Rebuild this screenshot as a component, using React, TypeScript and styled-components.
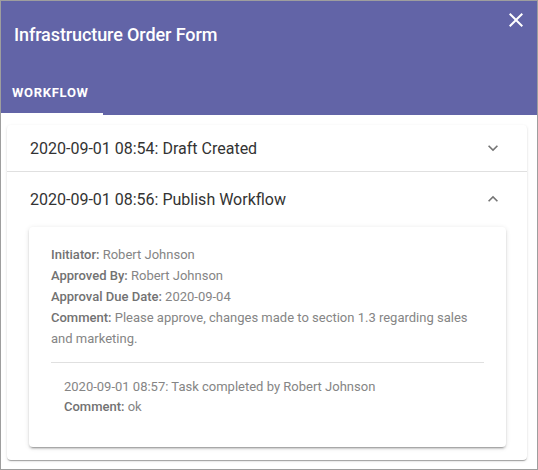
import styled, { createGlobalStyle } from "styled-components";

const GlobalStyle = createGlobalStyle`
  html, body {
    margin: 0;
    padding: 0;
    background: #ffffff;
  }
  body {
    font-family: Roboto, "Liberation Sans", Arial, sans-serif;
  }
`;

const colors = {
  purple: "#6264a7",
  frame: "#9e9e9e",
  heading: "#333333",
  text: "#858585",
  label: "#727272",
  divider: "#e0e0e0",
  icon: "#757575",
};

const entries = [
  {
    id: "draft",
    title: "2020-09-01 08:54: Draft Created",
    open: false,
  },
  {
    id: "publish",
    title: "2020-09-01 08:56: Publish Workflow",
    open: true,
  },
];

function CloseIcon() {
  return (
    <svg width="24" height="24" viewBox="0 0 24 24" fill="#ffffff">
      <path d="M19 6.41 17.59 5 12 10.59 6.41 5 5 6.41 10.59 12 5 17.59 6.41 19 12 13.41 17.59 19 19 17.59 13.41 12z" />
    </svg>
  );
}

function Chevron({ up }: { up: boolean }) {
  return (
    <svg width="20" height="20" viewBox="0 0 24 24" fill={colors.icon}>
      {up ? (
        <path d="M12 8l-6 6 1.41 1.41L12 10.83l4.59 4.58L18 14z" />
      ) : (
        <path d="M16.59 8.59 12 13.17 7.41 8.59 6 10l6 6 6-6z" />
      )}
    </svg>
  );
}

function WorkflowDetails() {
  return (
    <Card>
      <Field>
        <Label>Initiator:</Label> Robert Johnson
      </Field>
      <Field>
        <Label>Approved By:</Label> Robert Johnson
      </Field>
      <Field>
        <Label>Approval Due Date:</Label> 2020-09-04
      </Field>
      <Field>
        <Label>Comment:</Label> Please approve, changes made to section 1.3
        regarding sales and marketing.
      </Field>
      <Divider />
      <Task>
        <TaskLine>2020-09-01 08:57: Task completed by Robert Johnson</TaskLine>
        <TaskLine>
          <Label>Comment:</Label> ok
        </TaskLine>
      </Task>
    </Card>
  );
}

export default function App() {
  return (
    <>
      <GlobalStyle />
      <Frame>
        <Header>
          <TitleRow>
            <Title>Infrastructure Order Form</Title>
            <CloseButton aria-label="close">
              <CloseIcon />
            </CloseButton>
          </TitleRow>
          <Tabs>
            <Tab $active>WORKFLOW</Tab>
          </Tabs>
        </Header>
        <Content>
          <Accordion>
            {entries.map((entry, i) => (
              <Section key={entry.id} $first={i === 0}>
                <Summary $open={entry.open}>
                  <SummaryText>{entry.title}</SummaryText>
                  <Chevron up={entry.open} />
                </Summary>
                {entry.open && (
                  <Details>
                    <WorkflowDetails />
                  </Details>
                )}
              </Section>
            ))}
          </Accordion>
        </Content>
      </Frame>
    </>
  );
}

const Frame = styled.div`
  box-sizing: border-box;
  width: 538px;
  height: 470px;
  border: 1px solid ${colors.frame};
  display: flex;
  flex-direction: column;
  background: #ffffff;
  overflow: hidden;
`;

const Header = styled.header`
  background: ${colors.purple};
  height: 114px;
  display: flex;
  flex-direction: column;
  justify-content: space-between;
  flex-shrink: 0;
`;

const TitleRow = styled.div`
  display: flex;
  align-items: flex-start;
  justify-content: space-between;
  padding: 22px 9px 0 13px;
`;

const Title = styled.h1`
  margin: 0;
  font-size: 18px;
  font-weight: 500;
  line-height: 24px;
  letter-spacing: -0.1px;
  color: #ffffff;
`;

const CloseButton = styled.button`
  border: 0;
  background: transparent;
  padding: 0;
  margin-top: -15px;
  width: 24px;
  height: 24px;
  display: flex;
  cursor: pointer;
`;

const Tabs = styled.nav`
  display: flex;
`;

const Tab = styled.div<{ $active?: boolean }>`
  width: 102px;
  box-sizing: border-box;
  padding: 0 11px;
  height: 44px;
  display: flex;
  align-items: center;
  font-size: 13px;
  font-weight: 700;
  letter-spacing: 0.7px;
  color: #ffffff;
  border-bottom: 2px solid ${(p) => (p.$active ? "#ffffff" : "transparent")};
`;

const Content = styled.main`
  flex: 1;
  padding: 10px 10px 0 6px;
`;

const Accordion = styled.div`
  background: #ffffff;
  border-radius: 4px;
  box-shadow: 0px 2px 1px -1px rgba(0, 0, 0, 0.2),
    0px 1px 1px 0px rgba(0, 0, 0, 0.14), 0px 1px 3px 0px rgba(0, 0, 0, 0.12);
`;

const Section = styled.section<{ $first?: boolean }>`
  border-top: ${(p) => (p.$first ? "0" : `1px solid ${colors.divider}`)};
`;

const Summary = styled.div<{ $open?: boolean }>`
  height: ${(p) => (p.$open ? "54px" : "46px")};
  display: flex;
  align-items: center;
  justify-content: space-between;
  padding: 0 24px 0 23px;
`;

const SummaryText = styled.span`
  font-size: 16px;
  color: ${colors.heading};
`;

const Details = styled.div`
  padding: 1px 21px 13px 22px;
`;

const Card = styled.div`
  background: #ffffff;
  border-radius: 4px;
  padding: 17px 22px 30px 22px;
  box-shadow: 0px 3px 1px -2px rgba(0, 0, 0, 0.2),
    0px 2px 2px 0px rgba(0, 0, 0, 0.14), 0px 1px 5px 0px rgba(0, 0, 0, 0.12);
`;

const Field = styled.div`
  font-size: 13px;
  line-height: 21px;
  color: ${colors.text};
`;

const Label = styled.b`
  font-weight: 500;
  color: ${colors.label};
`;

const Divider = styled.hr`
  border: 0;
  border-top: 1px solid ${colors.divider};
  margin: 13px 0 14px 0;
`;

const Task = styled.div`
  padding-left: 13px;
`;

const TaskLine = styled.div`
  font-size: 13px;
  line-height: 20px;
  color: ${colors.text};
`;
